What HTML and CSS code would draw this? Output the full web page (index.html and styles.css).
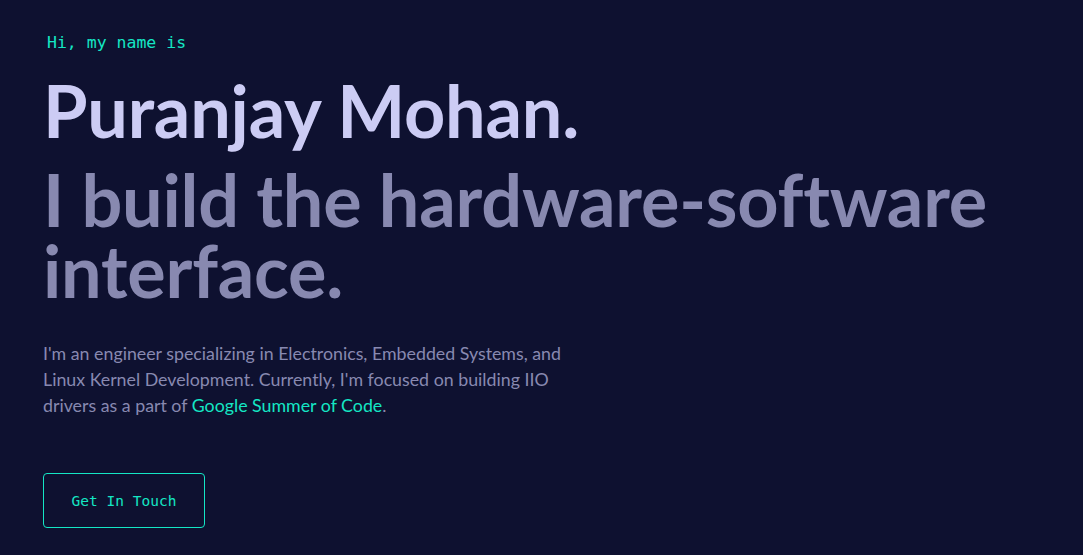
FILE: index.html
```html
<!DOCTYPE html>
<html lang="en">
<head>
<meta charset="utf-8">
<title>Puranjay Mohan</title>
<link rel="stylesheet" href="styles.css">
</head>
<body>
<section class="hero">
  <h1 class="intro">Hi, my name is</h1>
  <h2 class="big-heading name">Puranjay Mohan.</h2>
  <h3 class="big-heading tagline">I build the hardware-software interface.</h3>
  <p class="summary">I'm an engineer specializing in Electronics, Embedded Systems, and Linux Kernel Development. Currently, I'm focused on building IIO drivers as a part of <a class="link" href="#">Google Summer of Code</a>.</p>
  <a class="cta" href="#">Get In Touch</a>
</section>
</body>
</html>
```

FILE: styles.css
```css
html, body {
  margin: 0;
  padding: 0;
}
body {
  background: #0e1130;
  width: 1083px;
  height: 555px;
  overflow: hidden;
  font-family: "Lato", "Liberation Sans", sans-serif;
}
.hero {
  display: flex;
  flex-direction: column;
  align-items: flex-start;
  padding: 32px 43px 0;
}
.intro {
  margin: 0 0 21px 4px;
  font-family: "DejaVu Sans Mono", "Liberation Mono", monospace;
  font-weight: 400;
  font-size: 16.5px;
  line-height: 22px;
  color: #14e6c4;
}
.big-heading {
  margin: 0;
  font-weight: 700;
  font-size: 72px;
  line-height: 71px;
  letter-spacing: -0.2px;
}
.name {
  color: #ccccf4;
}
.tagline {
  margin-top: 18px;
  color: #8889b0;
  max-width: 1000px;
}
.summary {
  margin: 34px 0 0;
  max-width: 540px;
  font-size: 17.8px;
  line-height: 26px;
  color: #8889b0;
}
.link {
  color: #14e6c4;
  text-decoration: none;
}
.cta {
  margin-top: 55px;
  display: flex;
  align-items: center;
  justify-content: center;
  width: 160px;
  height: 53px;
  border: 1px solid #14e6c4;
  border-radius: 4px;
  font-family: "DejaVu Sans Mono", "Liberation Mono", monospace;
  font-size: 14.5px;
  color: #14e6c4;
  text-decoration: none;
}
```
